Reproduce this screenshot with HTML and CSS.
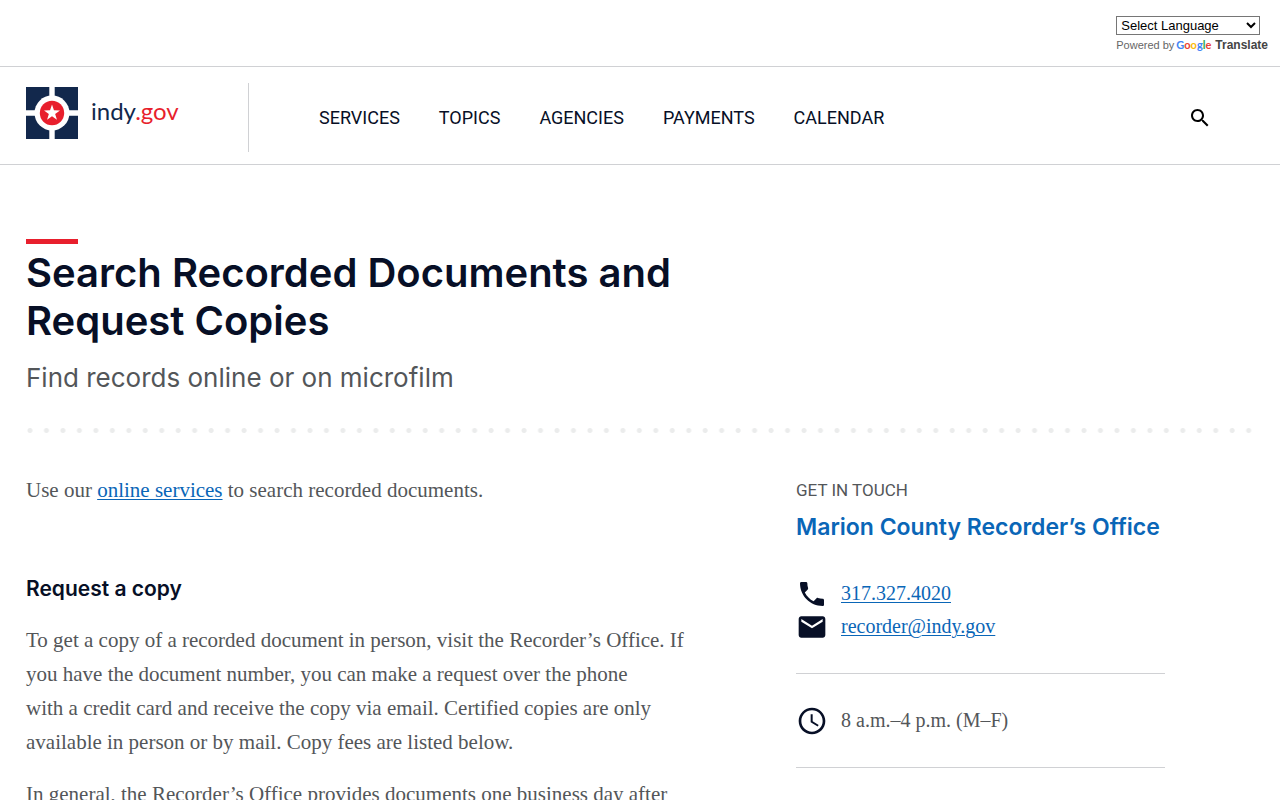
FILE: index.html
```html
<!DOCTYPE html>
<html lang="en">
<head>
    <meta charset="UTF-8">
    <meta name="viewport" content="width=device-width, initial-scale=1">
    <title>Search Recorded Documents and Request Copies</title>
    <link rel="stylesheet" href="styles.css">
</head>
<body>
    <div class="translate-bar">
        <div class="translate">
            <select class="translate-select" aria-label="Language Translate Widget">
                <option>Select Language</option>
            </select>
            <div class="translate-credit">
                <span>Powered by</span>
                <a class="translate-link" href="https://translate.google.com">
                    <span class="google"><span class="g-blue">G</span><span class="g-red">o</span><span class="g-yellow">o</span><span class="g-blue">g</span><span class="g-green">l</span><span class="g-red">e</span></span>
                    <span>Translate</span>
                </a>
            </div>
        </div>
    </div>

    <header class="site-header">
        <a class="logo" href="/" aria-label="indy.gov home">
            <svg class="logo-mark" viewBox="0 0 52 52" aria-hidden="true">
                <rect width="52" height="52" fill="#12284c"/>
                <path d="M26 0v52M0 26h52" stroke="#fff" stroke-width="5.4"/>
                <circle cx="26" cy="26" r="17.5" fill="#fff"/>
                <circle cx="26" cy="26" r="12.2" fill="#e81f2d"/>
                <path fill="#fff" d="M26 17.6l1.95 5.7 6.04.1-4.83 3.63 1.78 5.77L26 29.34l-4.94 3.46 1.78-5.77-4.83-3.63 6.04-.1z"/>
            </svg>
            <span class="logo-text">indy<span class="logo-gov">.gov</span></span>
        </a>
        <nav class="main-nav">
            <a href="/services">Services</a>
            <a href="/topics">Topics</a>
            <a href="/agencies">Agencies</a>
            <a href="/payments">Payments</a>
            <a href="/calendar">Calendar</a>
        </nav>
        <button class="search-button" type="button" aria-label="Search">
            <svg viewBox="0 0 24 24" width="24" height="24" aria-hidden="true">
                <path d="M15.5 14h-.79l-.28-.27C15.41 12.59 16 11.11 16 9.5 16 5.91 13.09 3 9.5 3S3 5.91 3 9.5 5.91 16 9.5 16c1.61 0 3.09-.59 4.23-1.57l.27.28v.79l5 4.99L20.49 19l-4.99-5zm-6 0C7.01 14 5 11.99 5 9.5S7.01 5 9.5 5 14 7.01 14 9.5 11.99 14 9.5 14z"/>
            </svg>
        </button>
    </header>

    <main class="page">
        <div class="page-heading">
            <h1>Search Recorded Documents and Request Copies</h1>
            <p class="subtitle">Find records online or on microfilm</p>
        </div>
        <div class="dots"></div>

        <div class="columns">
            <article class="content">
                <p>Use our <a href="#">online services</a> to search recorded documents.</p>
                <h2>Request a copy</h2>
                <p>To get a copy of a recorded document in person, visit the Recorder’s Office. If<br>
                    you have the document number, you can make a request over the phone<br>
                    with a credit card and receive the copy via email. Certified copies are only<br>
                    available in person or by mail. Copy fees are listed below.</p>
                <p>In general, the Recorder’s Office provides documents one business day after</p>
            </article>

            <aside class="contact">
                <p class="contact-label">Get in touch</p>
                <a class="contact-title" href="#">Marion County Recorder’s Office</a>
                <ul class="contact-list">
                    <li>
                        <svg viewBox="0 0 24 24" aria-hidden="true"><path d="M6.62 10.79c1.44 2.83 3.76 5.14 6.59 6.59l2.2-2.2c.27-.27.67-.36 1.02-.24 1.12.37 2.33.57 3.57.57.55 0 1 .45 1 1V20c0 .55-.45 1-1 1-9.39 0-17-7.61-17-17 0-.55.45-1 1-1h3.5c.55 0 1 .45 1 1 0 1.25.2 2.45.57 3.57.11.35.03.74-.25 1.02l-2.2 2.2z"/></svg>
                        <a href="tel:3173274020">317.327.4020</a>
                    </li>
                    <li>
                        <svg viewBox="0 0 24 24" aria-hidden="true"><path d="M20 4H4c-1.1 0-1.99.9-1.99 2L2 18c0 1.1.9 2 2 2h16c1.1 0 2-.9 2-2V6c0-1.1-.9-2-2-2zm0 4l-8 5-8-5V6l8 5 8-5v2z"/></svg>
                        <a href="mailto:recorder@indy.gov">recorder@indy.gov</a>
                    </li>
                </ul>
                <ul class="contact-list">
                    <li>
                        <svg viewBox="0 0 24 24" aria-hidden="true"><path d="M11.99 2C6.47 2 2 6.48 2 12s4.47 10 9.99 10C17.52 22 22 17.52 22 12S17.52 2 11.99 2zM12 20c-4.42 0-8-3.58-8-8s3.58-8 8-8 8 3.58 8 8-3.58 8-8 8zm.5-13H11v6l5.25 3.15.75-1.23-4.5-2.67z"/></svg>
                        <span>8 a.m.–4 p.m. (M–F)</span>
                    </li>
                </ul>
            </aside>
        </div>
    </main>
</body>
</html>
```
FILE: styles.css
```css
* {
    box-sizing: border-box;
}
body {
    margin: 0;
    background: #fff;
    color: #535659;
    font-family: "Liberation Serif", serif;
    font-size: 20px;
    line-height: 34px;
}
/* the page scrolls without a visible scrollbar */
html {
    scrollbar-width: none;
}
h1, h2, p, ul {
    margin: 0;
    padding: 0;
}
a {
    color: #0a66b7;
    text-decoration-thickness: 1px;
    text-underline-offset: 2px;
}

/* Translate bar */
.translate-bar {
    display: flex;
    justify-content: flex-end;
    padding: 16px 12px 12px;
    border-bottom: 1px solid #d0d1d4;
    font-family: "Liberation Sans", sans-serif;
}
.translate {
    display: flex;
    flex-direction: column;
    align-items: flex-start;
}
.translate-select {
    width: 144px;
    height: 19px;
    padding: 0;
    background: #fff;
    color: #000;
    border: 1px solid #767676;
    font-family: inherit;
    font-size: 13px;
}
.translate-credit {
    display: flex;
    align-items: center;
    gap: 2px;
    margin-top: 2px;
    font-size: 11px;
    line-height: 17px;
    color: #666;
}
.translate-link {
    display: flex;
    gap: 4px;
    color: #444;
    font-size: 12px;
    font-weight: bold;
    text-decoration: none;
}
.google {
    font-family: Lato, sans-serif;
    font-size: 11px;
    line-height: 16px;
}
.g-blue { color: #4285f4; }
.g-red { color: #ea4335; }
.g-yellow { color: #fbbc05; }
.g-green { color: #34a853; }

/* Header */
.site-header {
    display: flex;
    align-items: center;
    padding: 16px 68px 12px 26px;
    border-bottom: 1px solid #d0d1d4;
}
.logo {
    display: flex;
    gap: 13px;
    width: 223px;
    height: 69px;
    padding-top: 4px;
    border-right: 1px solid #d0d1d4;
    text-decoration: none;
}
.logo-mark {
    width: 52px;
    height: 52px;
}
.logo-text {
    color: #12284c;
    font-family: Lato, sans-serif;
    font-size: 24px;
    line-height: 48px;
}
.logo-gov {
    color: #e81f2d;
}
.main-nav {
    display: flex;
    flex: 1;
    gap: 39px;
    padding-left: 70px;
    font-family: Roboto, sans-serif;
    font-size: 18px;
    line-height: 24px;
    text-transform: uppercase;
}
.main-nav a {
    color: #070f26;
    text-decoration: none;
}
.search-button {
    display: flex;
    padding: 0;
    background: none;
    border: none;
    cursor: pointer;
}

/* Page heading */
.page {
    padding: 74px 26px 0;
}
.page-heading {
    max-width: 700px;
    font-family: Inter, sans-serif;
}
.page-heading::before {
    content: "";
    display: block;
    width: 52px;
    height: 5px;
    margin-bottom: 5px;
    background: #e81f2d;
}
h1 {
    color: #070f26;
    font-size: 40px;
    font-weight: 600;
    line-height: 48px;
}
.subtitle {
    margin-top: 16px;
    font-size: 26px;
    line-height: 34px;
}
.dots {
    height: 5px;
    margin-top: 33px;
    background: radial-gradient(circle at 4px center, #ebecec 2px, transparent 3px) left top / calc(100% / 74.5) 100% repeat-x;
}

/* Columns */
.columns {
    display: flex;
    justify-content: space-between;
    padding-right: 89px;
    margin-top: 40px;
}
.content {
    width: 60%;
    font-size: 21px;
}
.content p {
    margin-bottom: 18px;
}
.content h2 {
    margin: 68px 0 20px;
    color: #070f26;
    font-family: Inter, sans-serif;
    font-size: 21px;
    font-weight: 600;
    line-height: 28px;
}
.contact {
    width: 369px;
}
.contact-label {
    font-family: Roboto, sans-serif;
    font-size: 17px;
    text-transform: uppercase;
}
.contact-title {
    display: block;
    margin-top: 2px;
    margin-bottom: 32px;
    font-family: Inter, sans-serif;
    font-size: 23px;
    font-weight: 600;
    line-height: 36px;
    text-decoration: none;
}
.contact-list {
    padding-bottom: 30px;
    margin-bottom: 30px;
    border-bottom: 1px solid #d0d1d4;
    list-style: none;
}
.contact-list li {
    display: flex;
    align-items: center;
    gap: 13px;
    line-height: 33px;
}
.contact-list svg {
    width: 32px;
    height: 32px;
    fill: #070f26;
}
```
